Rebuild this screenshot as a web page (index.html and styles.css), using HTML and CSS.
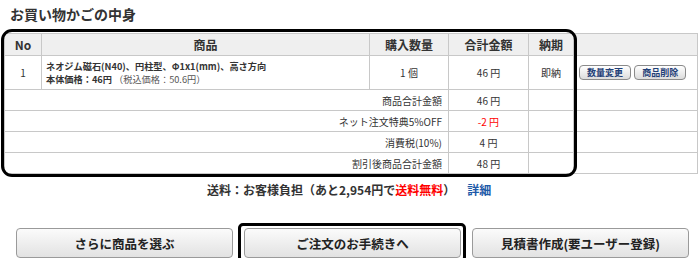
FILE: index.html
```html
<!DOCTYPE html>
<html lang="ja">
<head>
    <meta charset="UTF-8">
    <title>お買い物かご</title>
    <link rel="stylesheet" href="styles.css">
</head>
<body>

<div class="cart">
    <h2 class="cart-title">お買い物かごの中身</h2>

    <div class="cart-table-wrap">
        <table class="cart-table">
            <colgroup>
                <col class="col-no">
                <col class="col-item">
                <col class="col-qty">
                <col class="col-sum">
                <col class="col-date">
                <col class="col-act">
            </colgroup>
            <tr class="head-row">
                <th>No</th>
                <th>商品</th>
                <th>購入数量</th>
                <th>合計金額</th>
                <th>納期</th>
                <th></th>
            </tr>
            <tr class="item-row">
                <td class="center">1</td>
                <td class="item-name">
                    <strong>ネオジム磁石(N40)、円柱型、Φ1x1(mm)、高さ方向</strong><br>
                    <strong>本体価格：46円</strong> <span class="tax-price">（税込価格：50.6円）</span>
                </td>
                <td class="center">1 個</td>
                <td class="center">46 円</td>
                <td class="center">即納</td>
                <td class="actions">
                    <button class="small-btn" type="button">数量変更</button>
                    <button class="small-btn" type="button">商品削除</button>
                </td>
            </tr>
            <tr class="sum-row">
                <td colspan="3" class="label">商品合計金額</td>
                <td class="center">46 円</td>
                <td></td>
                <td></td>
            </tr>
            <tr class="sum-row">
                <td colspan="3" class="label">ネット注文特典5%OFF</td>
                <td class="center minus">-2 円</td>
                <td></td>
                <td></td>
            </tr>
            <tr class="sum-row">
                <td colspan="3" class="label">消費税(10%)</td>
                <td class="center">4 円</td>
                <td></td>
                <td></td>
            </tr>
            <tr class="sum-row">
                <td colspan="3" class="label">割引後商品合計金額</td>
                <td class="center">48 円</td>
                <td></td>
                <td></td>
            </tr>
        </table>
        <div class="highlight-box"></div>
    </div>

    <p class="shipping">
        送料：お客様負担（あと2,954円で<span class="free">送料無料</span>）<a href="#" class="detail">詳細</a>
    </p>

    <div class="cart-buttons">
        <button class="big-btn" type="button">さらに商品を選ぶ</button>
        <button class="big-btn marked" type="button">ご注文のお手続きへ</button>
        <button class="big-btn" type="button">見積書作成(要ユーザー登録)</button>
    </div>
</div>

</body>
</html>
```

FILE: styles.css
```css
body {
    margin: 0;
    font-family: "Noto Sans CJK JP", "DejaVu Sans", sans-serif;
    color: #333;
    background: #fff;
}
.cart {
    width: 700px;
    padding-top: 5px;
}
.cart-title {
    margin: 0 0 10px 10px;
    font-size: 14px;
    line-height: 18px;
    font-weight: bold;
    color: #333;
}
.cart-table-wrap {
    position: relative;
    margin-left: 4px;
    width: 693px;
}
.cart-table {
    width: 693px;
    border-collapse: collapse;
    table-layout: fixed;
    font-size: 10px;
}
.col-no { width: 37px; }
.col-item { width: 328px; }
.col-qty { width: 79px; }
.col-sum { width: 80px; }
.col-date { width: 45px; }
.col-act { width: 124px; }
.cart-table th,
.cart-table td {
    border: 1px solid #c8c8c8;
    padding: 0 4px;
}
.head-row th {
    height: 21px;
    background: #efefef;
    font-size: 12px;
    font-weight: bold;
    color: #333;
}
.item-row td {
    height: 33px;
    line-height: 13px;
}
.center {
    text-align: center;
}
.item-name {
    font-size: 9.2px;
}
.tax-price {
    color: #555;
}
.actions {
    padding: 0 0 0 5px !important;
    white-space: nowrap;
}
.small-btn {
    width: 52px;
    height: 15px;
    padding: 0;
    margin-right: 1px;
    font-family: inherit;
    font-size: 9px;
    font-weight: bold;
    line-height: 13px;
    color: #1f3f78;
    border: 1px solid #8a8a8a;
    border-radius: 4px;
    background: linear-gradient(#ffffff, #dcdcdc);
}
.sum-row td {
    height: 20px;
}
.label {
    text-align: right;
    padding-right: 6px !important;
}
.minus {
    color: #f00;
}
.highlight-box {
    position: absolute;
    left: -3px;
    top: -4px;
    width: 570px;
    height: 142px;
    border: 3px solid #000;
    border-radius: 11px;
    pointer-events: none;
}
.shipping {
    margin: 8px 0 0 0;
    padding-left: 207px;
    font-size: 12px;
    font-weight: bold;
    line-height: 16px;
    color: #333;
}
.free {
    color: #f00;
}
.detail {
    margin-left: 12px;
    color: #1d5aa8;
    text-decoration: none;
}
.cart-buttons {
    display: flex;
    gap: 11px;
    margin: 30px 0 0 16px;
}
.big-btn {
    width: 217px;
    height: 30px;
    padding: 0;
    font-family: inherit;
    font-size: 12.5px;
    font-weight: bold;
    color: #222;
    border: 1px solid #9a9a9a;
    border-radius: 4px;
    background: linear-gradient(#fbfbfb, #e2e2e2);
}
.big-btn.marked {
    position: relative;
}
.big-btn.marked::after {
    content: "";
    position: absolute;
    left: -7px;
    top: -6px;
    right: -6px;
    bottom: -5px;
    border: 3px solid #000;
    border-radius: 5px;
}
```
